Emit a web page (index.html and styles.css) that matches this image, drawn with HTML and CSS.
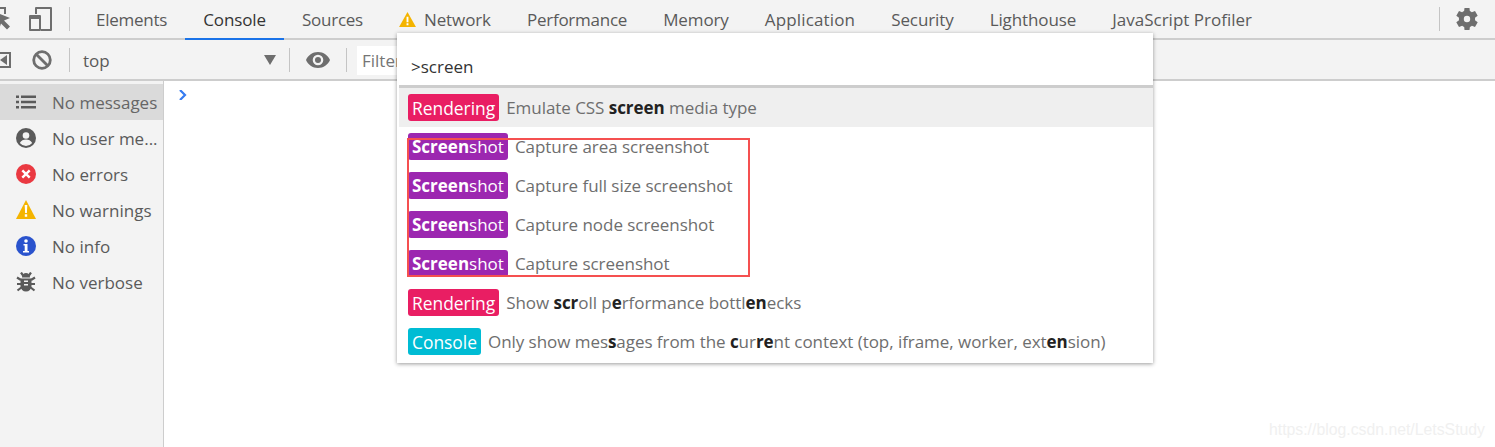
FILE: index.html
```html
<!DOCTYPE html>
<html lang="en">
<head>
    <meta charset="UTF-8">
    <meta name="viewport" content="width=device-width, initial-scale=1.0">
    <link rel="stylesheet" href="styles.css">
    <title>DevTools Console</title>
</head>
<body>
    <div class="tabbar">
        <svg class="inspect-icon" viewBox="0 0 28 26"><path d="M3 1h17v7h-2V3H3v15h6v2H1V1z" fill="#6e6e6e"/><path d="M9 6l15 6-6 2.500 6 6-3 3-6-6-2 6z" fill="#6e6e6e"/></svg>
        <svg class="device-icon" viewBox="0 0 23 24"><path d="M6 1a1 1 0 0 1 1-1h15a1 1 0 0 1 1 1v22a1 1 0 0 1-1 1H12v-2h9V2H8v5H6z" fill="#6e6e6e"/><path d="M1 8h10a1 1 0 0 1 1 1v14a1 1 0 0 1-1 1H1a1 1 0 0 1-1-1V9a1 1 0 0 1 1-1zm1 4v10h8V12z" fill="#6e6e6e" fill-rule="evenodd"/></svg>
        <span class="sep"></span>
        <nav class="tabs">
            <a class="tab tab-tight">Elements</a>
            <a class="tab active">Console</a>
            <a class="tab tab-tight">Sources</a>
            <a class="tab"><svg class="warn-small" viewBox="0 0 18 16"><path d="M9 0l9 16H0z" fill="#f4b400"/><path d="M8 5h2v6H8zm0 7h2v2H8z" fill="#fff"/></svg>Network</a>
            <a class="tab tab-tight">Performance</a>
            <a class="tab">Memory</a>
            <a class="tab tab-wide">Application</a>
            <a class="tab">Security</a>
            <a class="tab">Lighthouse</a>
            <a class="tab tab-plain">JavaScript Profiler</a>
        </nav>
        <span class="sep sep-right"></span>
        <svg class="gear-icon" viewBox="0 0 24 24"><path d="M20 13.200a8 8 0 0 0 0-2.400l2.700-2.100L20 4l-3.200 1.300a8 8 0 0 0-2-1.200L14.500 1h-5l-.4 3.100a8 8 0 0 0-2 1.200L4 4 1.300 8.700 4 10.800a8 8 0 0 0 0 2.400l-2.700 2.100L4 20l3.200-1.300a8 8 0 0 0 2 1.200l.3 3.100h5l.4-3.100a8 8 0 0 0 2-1.200L20 20l2.700-4.700zM12 15.200a3.200 3.200 0 1 1 0-6.400 3.200 3.200 0 0 1 0 6.400z" fill="#6e6e6e"/></svg>
    </div>

    <div class="filterbar">
        <svg class="side-toggle" viewBox="0 0 20 18"><path d="M0 1h19v16H0v-2h17V3H0z" fill="#6e6e6e"/><path d="M15 4v10L8 9z" fill="#6e6e6e"/></svg>
        <svg class="ban-icon" viewBox="0 0 20 20"><circle cx="10" cy="10" r="8.300" fill="none" stroke="#6e6e6e" stroke-width="2.800"/><path d="M4.500 4.500l11 11" stroke="#6e6e6e" stroke-width="2.800"/></svg>
        <span class="sep"></span>
        <div class="context">
            <span>top</span>
            <span class="arrow"></span>
        </div>
        <span class="sep"></span>
        <svg class="eye-icon" viewBox="0 0 24 16"><path d="M12 0C6.500 0 2 3.300 0 8c2 4.700 6.500 8 12 8s10-3.300 12-8c-2-4.700-6.500-8-12-8zm0 13.300A5.300 5.300 0 1 1 12 2.700a5.300 5.300 0 0 1 0 10.600zM12 5a3 3 0 1 0 0 6 3 3 0 0 0 0-6z" fill="#6e6e6e" fill-rule="evenodd"/></svg>
        <span class="sep"></span>
        <div class="filter-input">Filter</div>
    </div>

    <div class="main">
        <aside class="sidebar">
            <div class="side-row selected">
                <svg viewBox="0 0 20 20"><path d="M0 3.500h3v2.500H0zm5 0h15v2.500H5zM0 8.750h3v2.500H0zm5 0h15v2.500H5zM0 14h3v2.500H0zm5 0h15v2.500H5z" fill="#5a5a5a"/></svg>
                <span>No messages</span>
            </div>
            <div class="side-row">
                <svg viewBox="0 0 20 20"><circle cx="10" cy="10" r="10" fill="#5a5a5a"/><circle cx="10" cy="7.500" r="3.300" fill="#f3f3f3"/><path d="M3.800 15c1.200-2.400 3.700-3.500 6.200-3.500s5 1.100 6.200 3.500a8 8 0 0 1-12.400 0z" fill="#f3f3f3"/></svg>
                <span>No user me...</span>
            </div>
            <div class="side-row">
                <svg viewBox="0 0 20 20"><circle cx="10" cy="10" r="10" fill="#ea3941"/><path d="M6.300 6.300l7.400 7.400m0-7.400l-7.400 7.400" stroke="#fff" stroke-width="2.400"/></svg>
                <span>No errors</span>
            </div>
            <div class="side-row">
                <svg viewBox="0 0 20 20"><path d="M10 0l10 19H0z" fill="#f4b400"/><path d="M8.700 5h2.600l-.4 8H9.100zM8.800 14.300h2.400v2.400H8.800z" fill="#fff"/></svg>
                <span>No warnings</span>
            </div>
            <div class="side-row">
                <svg viewBox="0 0 20 20"><circle cx="10" cy="10" r="10" fill="#2a53cd"/><circle cx="10" cy="5" r="1.800" fill="#fff"/><path d="M7.500 8h4v7h1.500v1.500H7V15h1.700V9.500H7.500z" fill="#fff"/></svg>
                <span>No info</span>
            </div>
            <div class="side-row">
                <svg viewBox="0 0 20 20"><path d="M6 5.500a4 4.500 0 0 1 8 0zM4.500 6.500h11V14a5.500 5.500 0 0 1-11 0z" fill="#5a5a5a"/><path d="M5 0.500l2.500 3.500m7.500-3.500L12.500 4M1 5.500l4 2.500m14-2.500L15 8M1 12h4m14 0h-4M1.500 18.500L6 15m12.500 3.500L14 15" stroke="#5a5a5a" stroke-width="2.200"/><path d="M8 8.500h4V10H8zm0 3.500h4v1.500H8z" fill="#f3f3f3"/></svg>
                <span>No verbose</span>
            </div>
        </aside>
        <div class="console-area">
            <svg class="prompt" viewBox="0 0 8 10"><path d="M1 0l5 5-5 5" fill="none" stroke="#367cf1" stroke-width="2.200"/></svg>
        </div>
    </div>

    <div class="palette">
        <div class="palette-input">&gt;screen</div>
        <div class="palette-list">
            <div class="cmd current"><span class="badge rendering">Rendering</span><span class="desc">Emulate CSS <b>screen</b> media type</span></div>
            <div class="cmd"><span class="badge screenshot"><b>Screen</b>shot</span><span class="desc">Capture area screenshot</span></div>
            <div class="cmd"><span class="badge screenshot"><b>Screen</b>shot</span><span class="desc">Capture full size screenshot</span></div>
            <div class="cmd"><span class="badge screenshot"><b>Screen</b>shot</span><span class="desc">Capture node screenshot</span></div>
            <div class="cmd"><span class="badge screenshot"><b>Screen</b>shot</span><span class="desc">Capture screenshot</span></div>
            <div class="cmd"><span class="badge rendering">Rendering</span><span class="desc">Show <b>scr</b>oll p<b>e</b>rformance bottl<b>en</b>ecks</span></div>
            <div class="cmd"><span class="badge console">Console</span><span class="desc">Only show mes<b>s</b>ages from the <b>c</b>ur<b>re</b>nt context (top, iframe, worker, ext<b>en</b>sion)</span></div>
        </div>
    </div>

    <div class="red-box"></div>
    <div class="watermark">https://blog.csdn.net/LetsStudy</div>
</body>
</html>
```

FILE: styles.css
```css
html, body {
    height: 100%;
}

body {
    margin: 0;
    font-family: "Open Sans", "Noto Sans", sans-serif;
    font-size: 17px;
    color: #5a5a5a;
    background-color: #fff;
    overflow: hidden;
    position: relative;
}

svg {
    display: block;
    flex: none;
}

.tabbar {
    height: 38px;
    display: flex;
    align-items: center;
    background-color: #f3f3f3;
    border-bottom: 2px solid #cdcdcd;
}

.inspect-icon {
    width: 28px;
    height: 26px;
    margin-left: -14px;
}

.device-icon {
    width: 23px;
    height: 24px;
    margin-left: 15px;
}

.sep {
    width: 1px;
    height: 24px;
    flex: none;
    background-color: #c4c4c4;
}

.tabbar > .sep {
    margin-left: 17px;
}

.tabs {
    display: flex;
    align-self: stretch;
    margin-left: 8px;
}

.tab {
    display: flex;
    align-items: center;
    padding: 0 18px;
    color: #5a5a5a;
    white-space: nowrap;
    letter-spacing: -0.1px;
    margin-bottom: -2px;
    border-bottom: 2px solid transparent;
}

.tab-tight {
    letter-spacing: -0.25px;
}

.tab-wide {
    letter-spacing: 0.15px;
}

.tab-plain {
    letter-spacing: 0;
}

.tab.active {
    color: #333;
    border-bottom-color: #1a73e8;
}

.warn-small {
    width: 17px;
    height: 15px;
    margin-right: 8px;
}

.tabbar > .sep-right {
    margin-left: auto;
}

.gear-icon {
    width: 24px;
    height: 24px;
    margin: 0 16px 0 15px;
}

.filterbar {
    height: 38px;
    padding-top: 1px;
    display: flex;
    align-items: center;
    background-color: #f3f3f3;
    border-bottom: 2px solid #cdcdcd;
}

.side-toggle {
    width: 20px;
    height: 18px;
    margin-left: -8px;
}

.ban-icon {
    width: 20px;
    height: 20px;
    margin: 0 17px 0 20px;
}

.context {
    width: 219px;
    box-sizing: border-box;
    display: flex;
    align-items: center;
    justify-content: space-between;
    padding: 0 13px 0 13px;
}

.arrow {
    width: 0;
    height: 0;
    border-left: 6px solid transparent;
    border-right: 6px solid transparent;
    border-top: 10px solid #6e6e6e;
}

.eye-icon {
    width: 24px;
    height: 16px;
    margin: 0 16px;
}

.filter-input {
    margin-left: 10px;
    width: 280px;
    height: 29px;
    line-height: 29px;
    padding-left: 5px;
    background-color: #fff;
    color: #757575;
}

.main {
    display: flex;
    height: calc(100vh - 81px);
}

.sidebar {
    width: 163px;
    flex: none;
    padding-top: 3px;
    background-color: #f3f3f3;
    border-right: 1px solid #cdcdcd;
}

.side-row {
    height: 36px;
    display: flex;
    align-items: center;
    gap: 16px;
    padding-left: 16px;
    white-space: nowrap;
}

.side-row svg {
    width: 20px;
    height: 20px;
}

.side-row.selected {
    background-color: #dadada;
    color: #666;
}

.console-area {
    flex: 1;
    padding: 9px 0 0 15px;
}

.prompt {
    width: 8px;
    height: 10px;
}

/* command menu, sits over the toolbar and console */
.palette {
    position: absolute;
    left: 397px;
    top: 33px;
    width: 756px;
    height: 330px;
    background-color: #fff;
    box-shadow: 0 1px 4px rgba(0, 0, 0, 0.4);
}

.palette-input {
    height: 52px;
    box-sizing: border-box;
    padding: 21px 0 0 14px;
    line-height: 26px;
    color: #333;
}

.palette-list {
    margin-left: 2px;
    border-top: 3px solid #cdcdcd;
}

.cmd {
    height: 39px;
    display: flex;
    align-items: center;
    padding-left: 9px;
    white-space: nowrap;
    color: #6e6e6e;
}

.cmd.current {
    background-color: #efefef;
}

.cmd b {
    color: #222;
}

.desc {
    letter-spacing: -0.05px;
}

.badge {
    height: 27px;
    line-height: 28px;
    padding: 0 4px;
    border-radius: 3px;
    color: #fff;
    margin-right: 7px;
}

.badge b {
    color: #fff;
}

.rendering {
    background-color: #e91e63;
    font-size: 17.4px;
}

.screenshot {
    background-color: #9c27b0;
}

.console {
    background-color: #00bcd4;
    font-size: 17.4px;
}

.red-box {
    position: absolute;
    left: 407px;
    top: 138px;
    width: 339px;
    height: 135px;
    border: 2px solid #f55050;
}

.watermark {
    position: absolute;
    right: 10px;
    bottom: 8px;
    font-family: "Liberation Sans", sans-serif;
    font-size: 15.8px;
    color: #f0f0f0;
}
```
